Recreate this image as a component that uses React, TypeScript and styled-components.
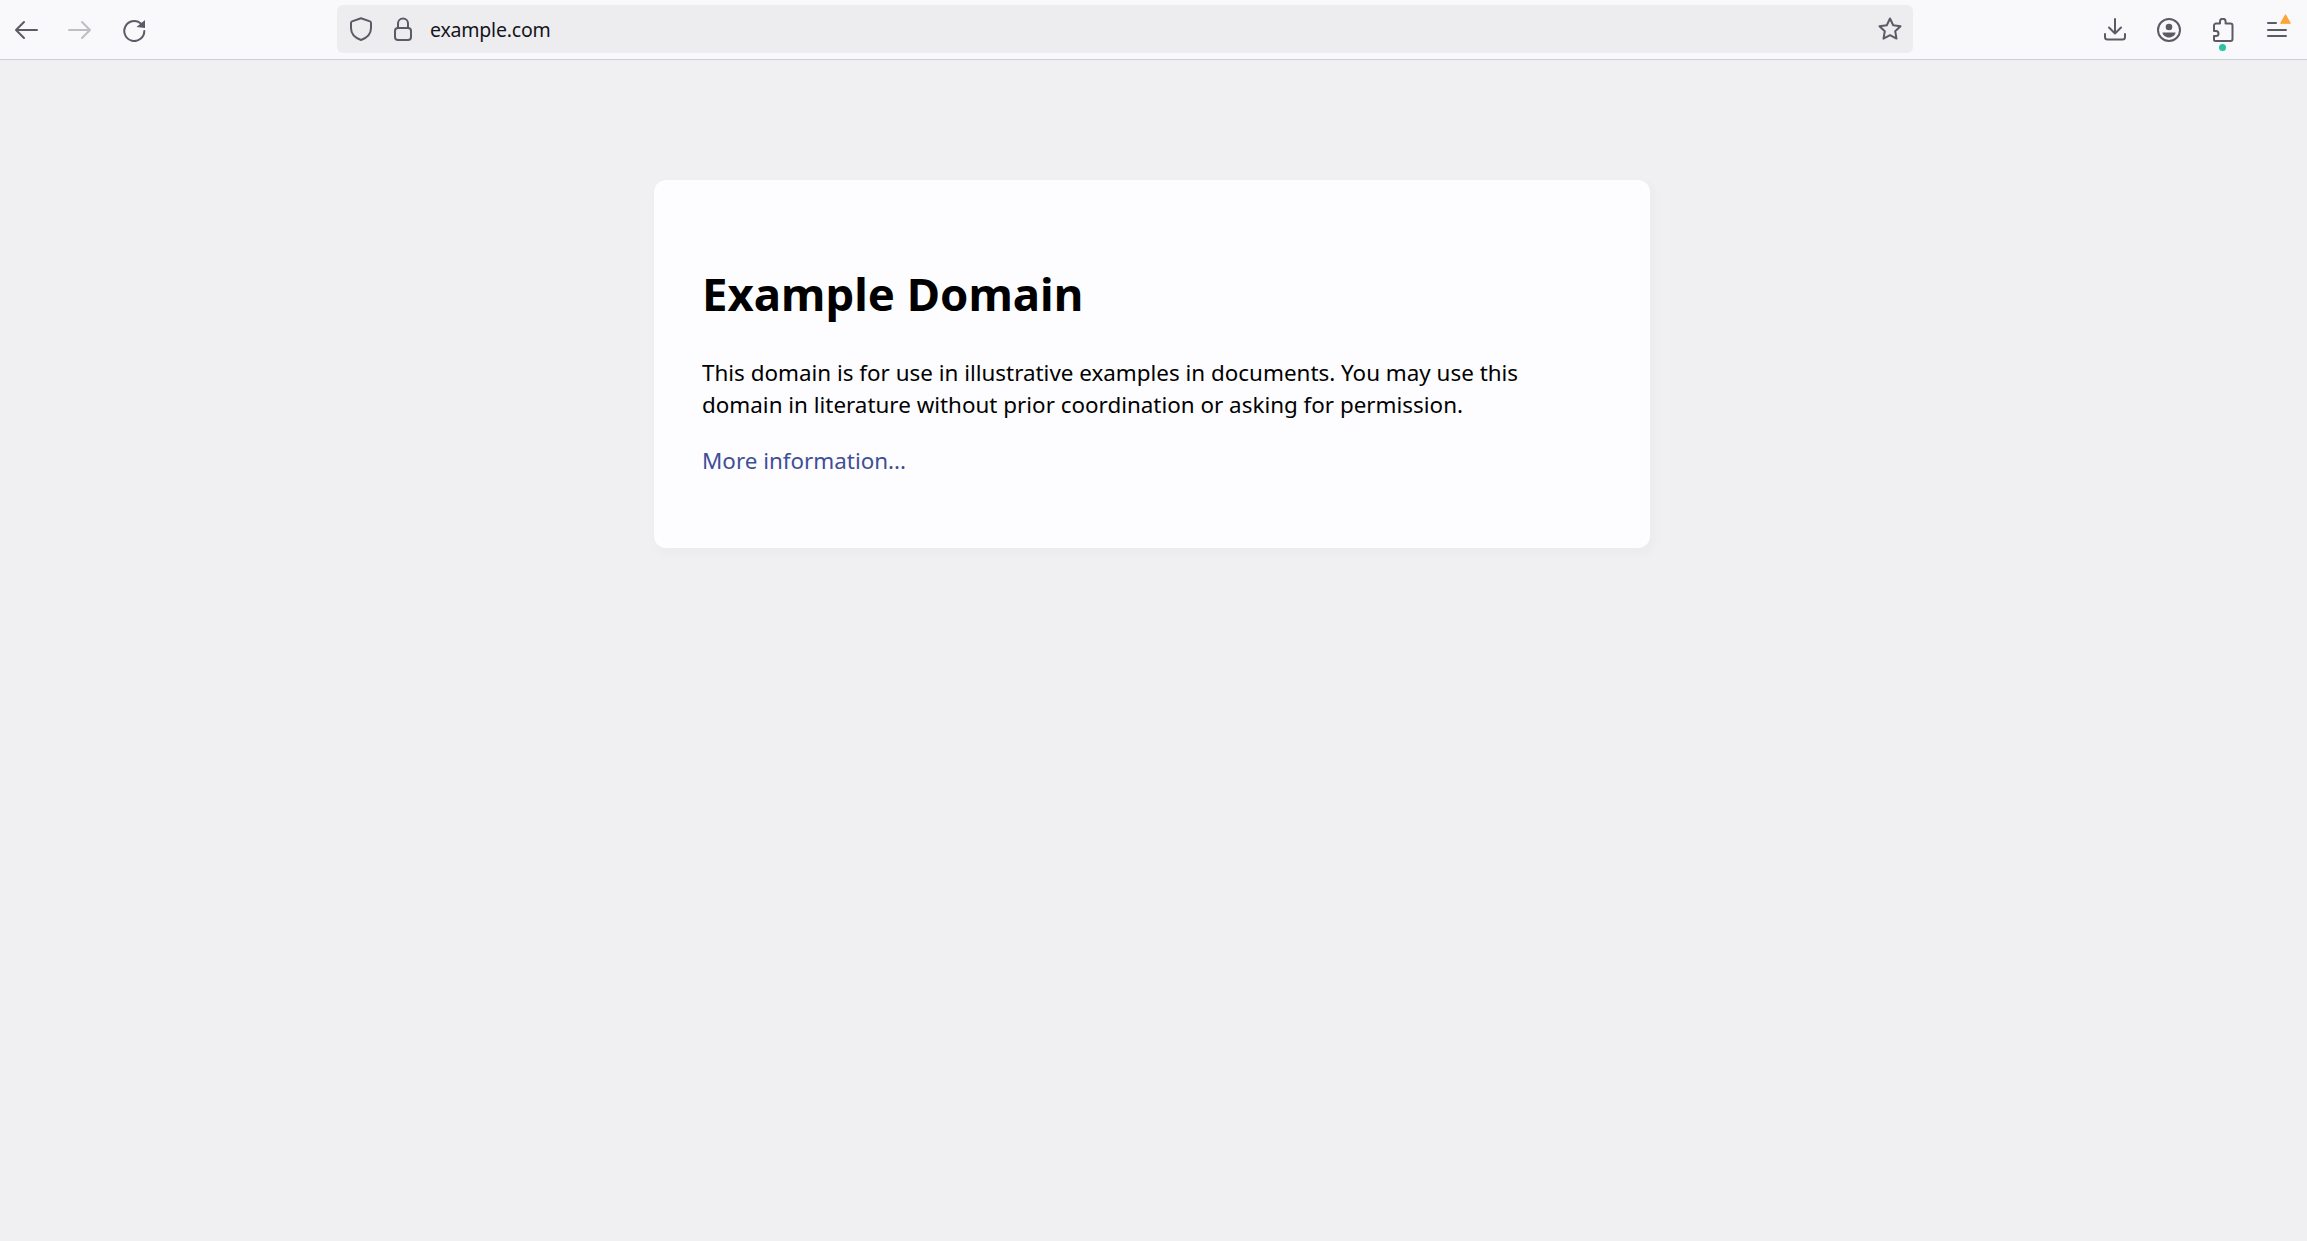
import React from "react";
import styled, { createGlobalStyle } from "styled-components";

const Global = createGlobalStyle`
  html, body { margin: 0; padding: 0; height: 100%; background: #f0f0f2; }
  body { font-family: "Noto Sans", "Open Sans", sans-serif; }
  #root { min-height: 100%; }
`;
const Page = styled.div`
  min-height: 1241px;
  background: #f0f0f2;
`;
const Toolbar = styled.header`
  display: flex;
  align-items: center;
  height: 59px;
  padding-right: 3px;
  background: #f9f9fb;
  border-bottom: 1px solid #cfcfd8;
`;
const Slot = styled.div<{ $inset?: number }>`
  position: relative;
  flex: none;
  box-sizing: border-box;
  width: 54px;
  height: 59px;
  padding-right: ${(p) => p.$inset ?? 1}px;
  display: flex;
  align-items: center;
  justify-content: center;
  svg { display: block; }
`;
const UrlBar = styled.div`
  flex: none;
  width: 1576px;
  height: 48px;
  margin: 5px 175px 0 175px;
  padding: 0 11.500px 0 11.500px;
  box-sizing: border-box;
  display: flex;
  align-items: center;
  background: #ededf0;
  border-radius: 6px;
  align-self: flex-start;
`;
const UrlIcon = styled.span<{ $gap: number }>`
  display: block;
  flex: none;
  width: 24px;
  height: 24px;
  margin-right: ${(p) => p.$gap}px;
  svg { display: block; }
`;
const UrlText = styled.span`
  flex: 1;
  font-size: 19.500px;
  color: #15141a;
  letter-spacing: -0.2px;
`;
const Dot = styled.span`
  position: absolute;
  left: 23px;
  top: 44px;
  width: 7px;
  height: 7px;
  border-radius: 50%;
  background: #2ac3a2;
`;
const Warn = styled.svg`
  position: absolute;
  left: 30px;
  top: 14px;
`;
const CardArea = styled.div`
  padding-right: 3px;
`;
const Card = styled.main`
  width: 900px;
  margin: 120px auto 0;
  padding: 48px;
  background: #fdfdff;
  border-radius: 12px;
  box-shadow: 3px 4px 10px 3px rgba(0, 0, 0, 0.02);
`;
const Title = styled.h1`
  margin: 32.500px 0 32px;
  font-size: 45.500px;
  line-height: 64px;
  font-weight: 700;
  color: #000;
`;
const Para = styled.p`
  margin: 24px 0;
  font-size: 22.420px;
  line-height: 32px;
  color: #000;
  &:last-child { margin-bottom: 23.500px; }
`;
const Info = styled.a`
  color: #3f4f96;
  text-decoration: none;
`;

const S = { fill: "none", stroke: "#5b5b66", strokeWidth: 2, strokeLinecap: "round", strokeLinejoin: "round" } as const;

const Ico: React.FC<{ children: React.ReactNode; stroke?: string }> = ({ children, stroke }) => (
  <svg width="24" height="24" viewBox="0 0 24 24" {...S} stroke={stroke ?? S.stroke}>{children}</svg>
);

export default function App() {
  return (
    <Page>
      <Global />
      <Toolbar>
        <Slot $inset={3}>
          <Ico><path d="M23 12H2M10 4l-8 8 8 8" /></Ico>
        </Slot>
        <Slot $inset={3}>
          <Ico stroke="#bebec3"><path d="M1 12h21M14 4l8 8-8 8" /></Ico>
        </Slot>
        <Slot $inset={3}>
          <Ico>
            <path d="M18.500 5.200A10 10 0 1 0 22.300 13" />
            <path d="M23 2v8l-8.500-1z" fill="#5b5b66" stroke="none" />
          </Ico>
        </Slot>
        <UrlBar>
          <UrlIcon $gap={18}>
            <Ico><path d="M12 1.200 3 4.400Q2 4.800 2 6v5c0 6 4.500 10 10 12 5.500-2 10-6 10-12V6q0-1.200-1-1.600z" /></Ico>
          </UrlIcon>
          <UrlIcon $gap={15.500}>
            <Ico>
              <rect x="4" y="11" width="16" height="12" rx="3" />
              <path d="M7 11V6.500a5 5 0 0 1 10 0V11" />
            </Ico>
          </UrlIcon>
          <UrlText>example.com</UrlText>
          <UrlIcon $gap={0}>
            <Ico><path d="M12 1.500l3.200 6.700 7.300 1-5.300 5.100 1.300 7.300L12 18.200 5.500 21.600l1.300-7.300-5.300-5.100 7.300-1z" /></Ico>
          </UrlIcon>
        </UrlBar>
        <Slot>
          <Ico><path d="M12 1v14.500M6 9.500l6 6 6-6M2 16v3q0 2.500 2.500 2.500h15Q22 21.500 22 19v-3" /></Ico>
        </Slot>
        <Slot>
          <Ico>
            <circle cx="12" cy="12" r="11" />
            <circle cx="12" cy="9" r="3.300" fill="#5b5b66" stroke="none" />
            <path d="M5.500 14.500h13c0 2.500-3 5-6.500 5s-6.500-2.500-6.500-5z" fill="#5b5b66" stroke="none" />
          </Ico>
        </Slot>
        <Slot>
          <Ico><path d="M9 5.500v-2a2.800 2.800 0 0 1 5.600 0v2h4.900a2 2 0 0 1 2 2V21a2 2 0 0 1-2 2h-15A1.500 1.500 0 0 1 3 21.500V18h2a2.500 2.500 0 0 0 0-5H3V7.500a2 2 0 0 1 2-2z" /></Ico>
          <Dot />
        </Slot>
        <Slot>
          <Ico><path d="M3 5h8M3 12h18M3 18h18" /></Ico>
          <Warn width="11" height="10" viewBox="0 0 11 10">
            <path d="M5.500 1 10.200 9.200H.8z" fill="#ffa436" stroke="#ffa436" strokeWidth="1.200" strokeLinejoin="round" />
          </Warn>
        </Slot>
      </Toolbar>
      <CardArea>
        <Card>
          <Title>Example Domain</Title>
          <Para>
            This domain is for use in illustrative examples in documents. You may use this domain in literature without prior coordination or asking for permission.
          </Para>
          <Para>
            <Info href="#">More information...</Info>
          </Para>
        </Card>
      </CardArea>
    </Page>
  );
}
